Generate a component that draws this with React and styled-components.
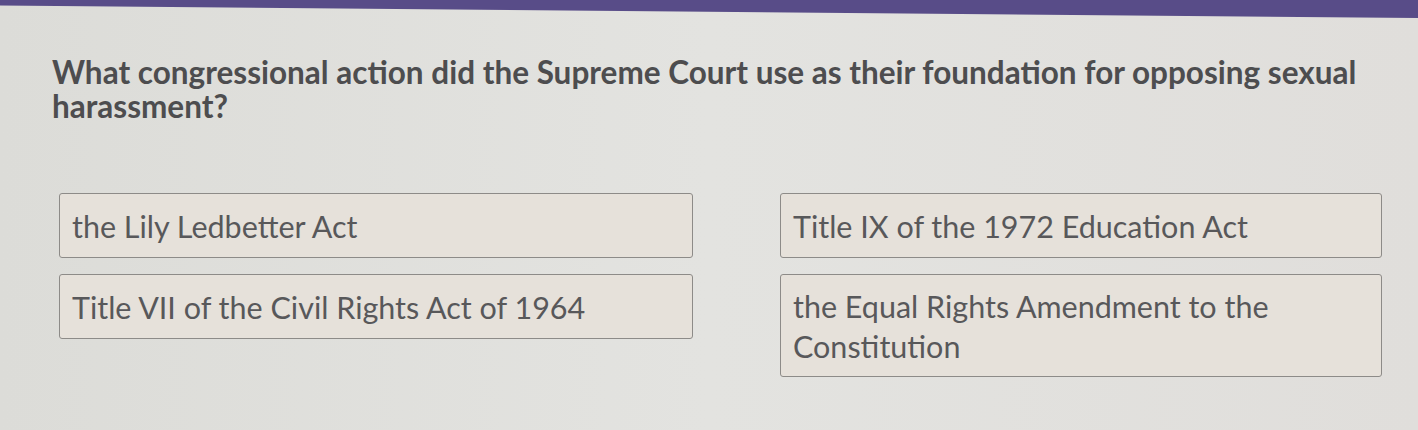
import React from "react";
import styled, { createGlobalStyle } from "styled-components";

const GlobalStyle = createGlobalStyle`
	body {
		margin: 0;
		background: #dfdfdc;
		font-family: "Lato", "Liberation Sans", sans-serif;
	}
`;

const Page = styled.div`
	width: 1418px;
	height: 430px;
	overflow: hidden;
	background: linear-gradient(90deg, #dcdcd8 0%, #e3e3e0 50%, #e0dedb 100%);
`;

const TopBar = styled.div`
	height: 18px;
	background: #584c88; // header purple
	clip-path: polygon(0 0, 100% 0, 100% 100%, 0 30%);
`;

const Content = styled.div`
	padding: 37px 40px 0 52px;
`;

const Question = styled.h2`
	margin: 0;
	width: 1340px;
	font-size: 31.5px;
	font-weight: 700;
	line-height: 34px;
	color: #4d4d4f;
`;

const Options = styled.div`
	display: grid;
	grid-template-columns: 634px 602px;
	column-gap: 87px;
	row-gap: 16px;
	align-items: start;
	margin-top: 70px;
	margin-left: 7px;
`;

const Option = styled.button`
	display: block;
	box-sizing: border-box;
	width: 100%;
	min-height: ${(p) => (p.tall ? "103px" : "65px")};
	padding: 11px 12px 10px 12px;
	background: #e6e1da;
	border: 1.5px solid #8d8b88;
	border-radius: 3px;
	text-align: left;
	font-family: inherit;
	font-size: 30.5px;
	line-height: 40px;
	color: #58585a;
	cursor: pointer;
`;

const choices = [
	{ label: "the Lily Ledbetter Act" },
	{ label: "Title IX of the 1972 Education Act" },
	{ label: "Title VII of the Civil Rights Act of 1964" },
	{ label: "the Equal Rights Amendment to the", rest: "Constitution", tall: true },
];

const App = () => {
	return (
		<Page>
			<GlobalStyle />
			<TopBar />
			<Content>
				<Question>
					What congressional action did the Supreme Court use as their foundation for opposing sexual
					harassment?
				</Question>
				<Options>
					{choices.map((c) => (
						<Option key={c.label} tall={c.tall ? 1 : 0}>
							{c.label}
							{c.rest && (
								<>
									<br />
									{c.rest}
								</>
							)}
						</Option>
					))}
				</Options>
			</Content>
		</Page>
	);
};

export default App;
